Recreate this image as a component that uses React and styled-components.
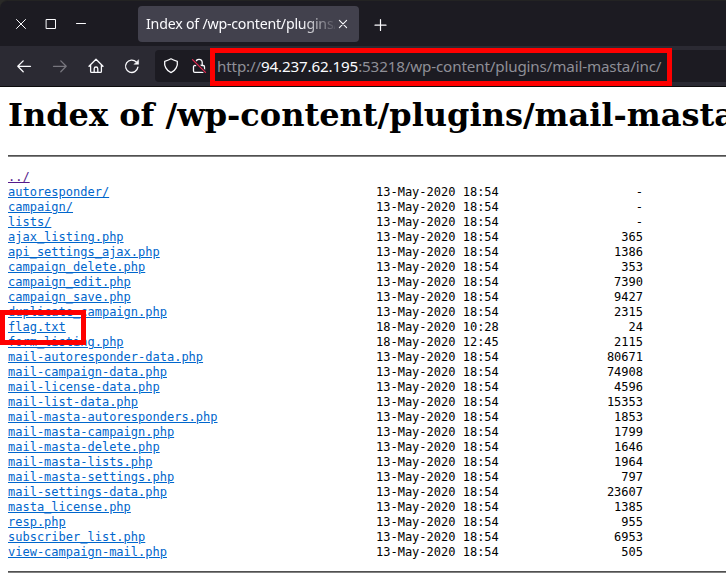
import React from "react";
import styled, { createGlobalStyle } from "styled-components";

const GlobalStyle = createGlobalStyle`
  *, *::before, *::after { box-sizing: border-box; }
  html, body { margin: 0; padding: 0; background: #fff; overflow: hidden; }
`;

const Window = styled.div`
  position: relative;
  width: 726px;
  height: 584px;
  overflow: hidden;
  background: #fff;
`;

const TabBar = styled.header`
  display: flex;
  height: 46px;
  padding: 6px 0 4px 13px;
  background: #1c1b22;
  border-top: 1px solid #232323;
  border-top-left-radius: 8px;
`;

const TabBarBackdrop = styled.div`
  background: #2a2a28;
`;

const WindowControls = styled.div`
  display: flex;
  gap: 14px;
  width: 125px;
  padding-top: 9px;
`;

const Glyph = styled.svg`
  display: block;
  flex: none;
  width: ${(p) => p.$size || 16}px;
  height: ${(p) => p.$size || 16}px;
  fill: none;
  stroke: ${(p) => p.$color || "#fbfbfe"};
  stroke-width: ${(p) => p.$weight || 1.3};
  stroke-linecap: round;
  stroke-linejoin: round;
`;

const Tab = styled.div`
  display: flex;
  align-items: center;
  width: 221px;
  height: 36px;
  margin-top: -1px;
  padding: 0 8px 0 8px;
  border-radius: 4px;
  background: #42414d;
`;

const TabTitle = styled.span`
  width: 189px;
  overflow: hidden;
  white-space: nowrap;
  font: 14.2px/20px "Noto Sans", sans-serif;
  letter-spacing: -0.22px;
  color: #fbfbfe;
  mask-image: linear-gradient(to right, #000 155px, transparent 192px);
`;

const NewTab = styled.div`
  padding: 10px 0 0 13px;
`;

const Toolbar = styled.nav`
  display: flex;
  align-items: center;
  height: 41px;
  background: #2b2a33;
  border-bottom: 1px solid #0c0c0d;
`;

const NavButtons = styled.div`
  display: flex;
  gap: 20px;
  width: 155px;
  padding-left: 16px;
`;

const UrlBar = styled.div`
  display: flex;
  align-items: center;
  flex: 1;
  height: 32px;
  padding-left: 8px;
  border-radius: 4px 0 0 4px;
  background: #1c1b22;
`;

const UrlIcons = styled.div`
  display: flex;
  gap: 12px;
  width: 54px;
`;

const Url = styled.span`
  font: 15.2px/22px "Noto Sans", sans-serif;
  letter-spacing: -0.15px;
  color: #8f8f97;
  white-space: nowrap;
`;

const Host = styled.span`
  color: #fbfbfe;
`;

const Page = styled.main`
  width: 726px;
  padding-left: 8px;
  color: #000;
`;

const Heading = styled.h1`
  margin: 0;
  padding-top: 9px;
  height: 68px;
  font: bold 32px/38px "DejaVu Serif", serif;
  white-space: nowrap;
`;

const Rule = styled.hr`
  height: 2px;
  margin: 0;
  border: 0;
  border-top: 1px solid #505050;
  background: #818181;
`;

const Listing = styled.div`
  padding: 13px 0 12px;
  height: 414px;
  font: 12px/15px "DejaVu Sans Mono", monospace;
`;

const Entry = styled.div`
  display: grid;
  grid-template-columns: 368px 123px 144px;
  height: 15px;
  white-space: pre;
`;

const FileLink = styled.a`
  justify-self: start;
  color: ${(p) => (p.$visited ? "#551a8b" : "#0066cc")};
  text-decoration: underline;
`;

const Size = styled.span`
  text-align: right;
`;

const Highlight = styled.div`
  position: absolute;
  left: ${(p) => p.$x}px;
  top: ${(p) => p.$y}px;
  width: ${(p) => p.$w}px;
  height: ${(p) => p.$h}px;
  border: 5px solid #fe0000;
`;

const may13 = "13-May-2020 18:54";
const files = [
  ["../", "", ""],
  ["autoresponder/", may13, "-"],
  ["campaign/", may13, "-"],
  ["lists/", may13, "-"],
  ["ajax_listing.php", may13, "365"],
  ["api_settings_ajax.php", may13, "1386"],
  ["campaign_delete.php", may13, "353"],
  ["campaign_edit.php", may13, "7390"],
  ["campaign_save.php", may13, "9427"],
  ["duplicate_campaign.php", may13, "2315"],
  ["flag.txt", "18-May-2020 10:28", "24"],
  ["form_listing.php", "18-May-2020 12:45", "2115"],
  ["mail-autoresponder-data.php", may13, "80671"],
  ["mail-campaign-data.php", may13, "74908"],
  ["mail-license-data.php", may13, "4596"],
  ["mail-list-data.php", may13, "15353"],
  ["mail-masta-autoresponders.php", may13, "1853"],
  ["mail-masta-campaign.php", may13, "1799"],
  ["mail-masta-delete.php", may13, "1646"],
  ["mail-masta-lists.php", may13, "1964"],
  ["mail-masta-settings.php", may13, "797"],
  ["mail-settings-data.php", may13, "23607"],
  ["masta_license.php", may13, "1385"],
  ["resp.php", may13, "955"],
  ["subscriber_list.php", may13, "6953"],
  ["view-campaign-mail.php", may13, "505"],
];

export default function App() {
  return (
    <Window>
      <GlobalStyle />
      <TabBarBackdrop>
        <TabBar>
          <WindowControls>
            <Glyph viewBox="0 0 16 16" $weight={1}><path d="M3.500 3.500l9 9M12.500 3.500l-9 9" /></Glyph>
            <Glyph viewBox="0 0 16 16" $weight={1}><path d="M3.500 3.500h9v9h-9z" /></Glyph>
            <Glyph viewBox="0 0 16 16" $weight={1}><path d="M3.500 7.500h9" /></Glyph>
          </WindowControls>
          <Tab>
            <TabTitle>Index of /wp-content/plugins/mail-masta</TabTitle>
            <Glyph viewBox="0 0 16 16" $weight={1.1}><path d="M4.400 4.400l7.200 7.200M11.600 4.400l-7.200 7.200" /></Glyph>
          </Tab>
          <NewTab>
            <Glyph viewBox="0 0 16 16" $weight={1.2}><path d="M8.500 2.500v11M3 8.200h11" /></Glyph>
          </NewTab>
        </TabBar>
      </TabBarBackdrop>
      <Toolbar>
        <NavButtons>
          <Glyph viewBox="0 0 16 16"><path d="M14.500 8.300H1.800M7.200 2.900L1.800 8.300l5.400 5.400" /></Glyph>
          <Glyph viewBox="0 0 16 16" $color="#77767e"><path d="M1.500 8.300h12.700M8.800 2.900L14.200 8.300l-5.400 5.400" /></Glyph>
          <Glyph viewBox="0 0 16 16"><path d="M1 8.200L8 1.300l7 6.900M2.600 7v6.400a1 1 0 0 0 1 1h8.800a1 1 0 0 0 1-1V7M6.200 14.200v-3.400a1.800 1.800 0 0 1 3.600 0v3.400" /></Glyph>
          <Glyph viewBox="0 0 16 16">
            <path d="M13.900 9.200A6.200 6.200 0 1 1 12.200 3.900" />
            <path d="M14.600 2v4.300h-4.300z" fill="#fbfbfe" strokeWidth=".5" />
          </Glyph>
        </NavButtons>
        <UrlBar>
          <UrlIcons>
            <Glyph viewBox="0 0 16 16" $weight={1.3}><path d="M8 .8C9.900 2.100 12 2.700 14.300 3.300c.7 4.500-1.600 9.300-6.300 11.400C3.300 12.600 1 7.800 1.700 3.300 4 2.700 6.100 2.100 8 .8z" /></Glyph>
            <Glyph viewBox="0 0 16 16" $weight={1.3}>
              <path d="M4.800 4.500a3.200 3.200 0 0 1 6.400 0V7.500M5 7.500H3.800a1.300 1.300 0 0 0-1.300 1.300V13a1.300 1.300 0 0 0 1.300 1.300h8.400a1.300 1.300 0 0 0 1.300-1.300V8.800a1.300 1.300 0 0 0-1.300-1.300H9" />
              <path d="M1.500 1.600l13 12.800" stroke="#1c1b22" strokeWidth="3" />
              <path d="M1.500 1.600l13 12.800" stroke="#e22850" />
            </Glyph>
          </UrlIcons>
          <Url>
            http://<Host>94.237.62.195</Host>:53218/wp-content/plugins/mail-masta/inc/
          </Url>
        </UrlBar>
      </Toolbar>
      <Page>
        <Heading>Index of /wp-content/plugins/mail-masta/inc/</Heading>
        <Rule />
        <Listing>
          {files.map(([name, date, size]) => (
            <Entry key={name}>
              <FileLink $visited={name === "../"}>{name}</FileLink>
              <span>{date}</span>
              <Size>{size}</Size>
            </Entry>
          ))}
        </Listing>
        <Rule />
      </Page>
      <Highlight $x={210} $y={48} $w={462} $h={38} />
      <Highlight $x={0} $y={310} $w={86} $h={35} />
    </Window>
  );
}
